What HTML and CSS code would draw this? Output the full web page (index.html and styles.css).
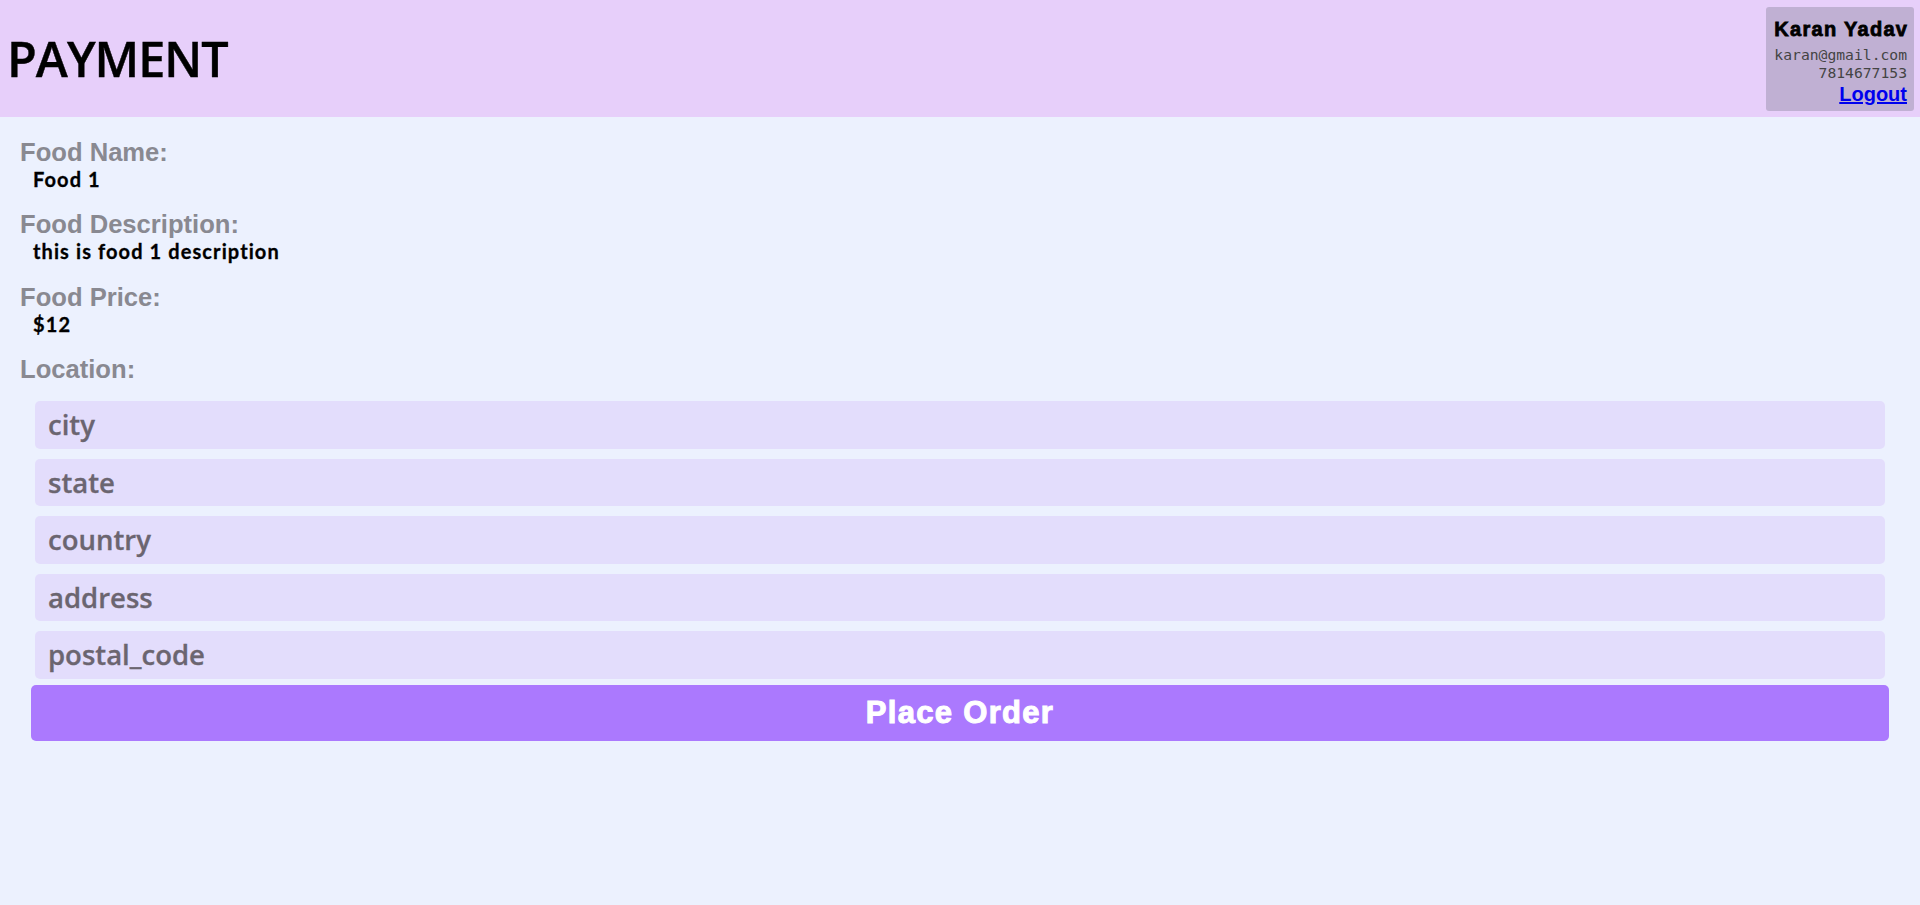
FILE: index.html
```html
<!DOCTYPE html>
<html lang="en">
<head>
<meta charset="utf-8">
<title>Payment</title>
<link rel="stylesheet" href="styles.css">
</head>
<body>
<header class="topbar">
  <h1 class="title">PAYMENT</h1>
  <div class="user-card">
    <div class="user-name">Karan Yadav</div>
    <div class="user-meta">karan@gmail.com</div>
    <div class="user-meta">7814677153</div>
    <a class="logout" href="#">Logout</a>
  </div>
</header>
<main class="content">
  <div class="field">
    <div class="label">Food Name:</div>
    <div class="value">Food 1</div>
  </div>
  <div class="field">
    <div class="label">Food Description:</div>
    <div class="value">this is food 1 description</div>
  </div>
  <div class="field">
    <div class="label">Food Price:</div>
    <div class="value">$12</div>
  </div>
  <div class="field field-last">
    <div class="label">Location:</div>
  </div>
  <form class="order-form">
    <div class="inputs">
      <input class="text-input" type="text" placeholder="city">
      <input class="text-input" type="text" placeholder="state">
      <input class="text-input" type="text" placeholder="country">
      <input class="text-input" type="text" placeholder="address">
      <input class="text-input" type="text" placeholder="postal_code">
    </div>
    <button class="order-btn" type="button">Place Order</button>
  </form>
</main>
</body>
</html>
```
FILE: styles.css
```css
* { box-sizing: border-box; }

html, body {
  margin: 0;
  padding: 0;
  min-height: 100%;
}

body {
  background: #ecf1fe;
  font-family: "Liberation Sans", Arial, sans-serif;
  min-height: 905px;
}

.topbar {
  height: 117px;
  background: #e7cffa;
  display: flex;
  align-items: center;
  justify-content: space-between;
  padding: 0 6px 0 7px;
}

.title {
  margin: 0;
  font-family: "Open Sans", sans-serif;
  font-weight: 600;
  font-size: 48.5px;
  letter-spacing: -1px;
  line-height: 1;
  color: #000;
  -webkit-text-stroke: 0.4px #000;
}

.user-card {
  width: 148px;
  background: #c0b0d3;
  border-radius: 3px;
  padding: 10px 7px 5px;
  text-align: right;
  display: flex;
  flex-direction: column;
  align-items: flex-end;
}

.user-name {
  font-family: "Liberation Sans", Arial, sans-serif;
  font-weight: 700;
  font-size: 20px;
  letter-spacing: 1.3px;
  margin-right: -1.3px;
  line-height: 24px;
  margin-bottom: 5px;
  color: #000;
  -webkit-text-stroke: 0.8px #000;
}

.user-meta {
  font-family: "DejaVu Sans Mono", "Liberation Mono", monospace;
  font-size: 14.7px;
  line-height: 18px;
  color: #444;
}

.logout {
  font-family: "Liberation Sans", Arial, sans-serif;
  font-weight: 700;
  font-size: 20px;
  line-height: 23px;
  margin-top: 1px;
  color: #0000ee;
  text-decoration: underline;
}

.content {
  padding: 20px 31px 0 20px;
}

.field {
  margin-bottom: 18.4px;
}

.field-last {
  margin-bottom: 17px;
}

.label {
  font-family: "Liberation Sans", Arial, sans-serif;
  font-weight: 700;
  font-size: 25.6px;
  line-height: 30px;
  color: #898991;
}

.value {
  font-family: "Lato", sans-serif;
  font-weight: 700;
  font-size: 20px;
  letter-spacing: 1.1px;
  line-height: 24px;
  padding-left: 13px;
  color: #000;
  -webkit-text-stroke: 0.3px #000;
}

.order-form {
  margin-left: 11px;
  display: flex;
  flex-direction: column;
  gap: 6px;
}

.inputs {
  display: flex;
  flex-direction: column;
  gap: 10px;
  padding: 0 4px;
}

.text-input {
  height: 47.5px;
  width: 100%;
  border: none;
  outline: none;
  border-radius: 5px;
  background: #e3ddfc;
  padding: 0 13px;
  font-family: "Open Sans", sans-serif;
  font-weight: 600;
  font-size: 27.5px;
  color: #6b6570;
}

.text-input::placeholder {
  color: #6b6570;
  opacity: 1;
  -webkit-text-stroke: 0.3px #6b6570;
}

.order-btn {
  height: 56px;
  width: 100%;
  border: none;
  border-radius: 5px;
  background: #ab79fe;
  color: #fff;
  font-family: "Liberation Sans", Arial, sans-serif;
  font-weight: 700;
  font-size: 31px;
  letter-spacing: 1.3px;
  -webkit-text-stroke: 1px #fff;
  display: flex;
  align-items: center;
  justify-content: center;
  padding: 0;
  cursor: pointer;
}
```
